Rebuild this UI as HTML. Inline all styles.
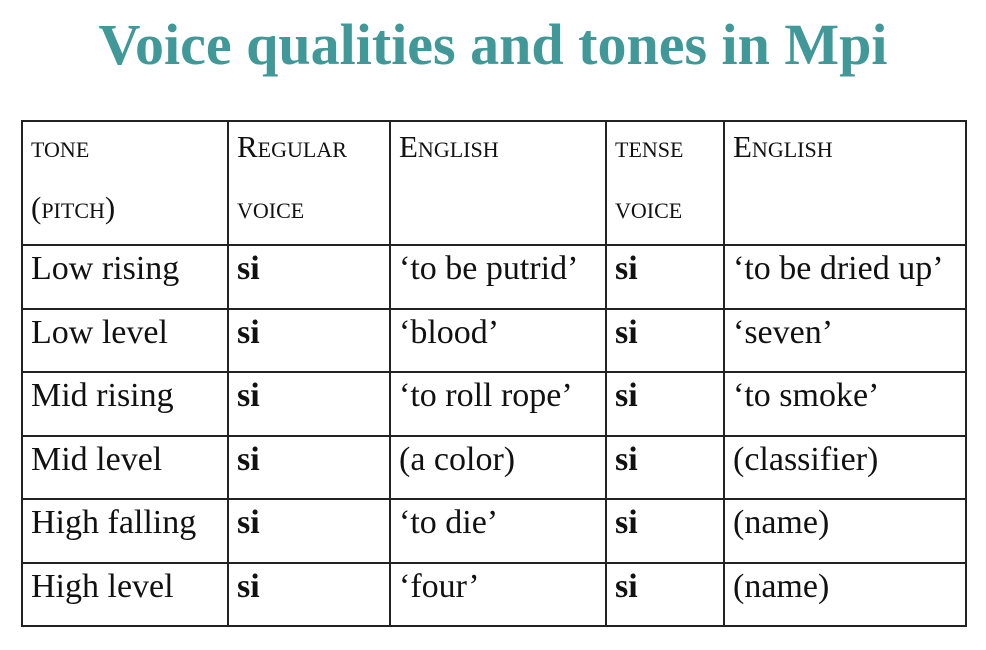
<!DOCTYPE html>
<html><head><style>
body{margin:0;width:986px;height:650px;background:#fff;overflow:hidden;font-family:"Liberation Serif",serif;}
h1{position:absolute;left:0;top:10px;width:986px;margin:0;text-align:center;color:#409898;font-size:58px;font-weight:bold;line-height:70px;}
table{position:absolute;left:21px;top:120px;border-collapse:collapse;}
td{border:2px solid #222;padding:3px 0 0 8px;vertical-align:top;font-size:34px;color:#111;height:58.5px;line-height:40px;}
tr.h td{height:121px;padding-top:0;font-variant:small-caps;font-size:31px;line-height:61px;}
tr.h td div{position:relative;top:-6px;height:122px;}
b{font-weight:bold}
</style></head><body>
<h1>Voice qualities and tones in Mpi</h1>
<table>
<colgroup><col style="width:206px"><col style="width:162px"><col style="width:216px"><col style="width:118px"><col style="width:242px"></colgroup>
<tr class="h"><td><div>tone<br>(pitch)</div></td><td><div>Regular<br>voice</div></td><td><div>English</div></td><td><div>tense<br>voice</div></td><td><div>English</div></td></tr>
<tr><td>Low rising</td><td><b>si</b></td><td>‘to be putrid’</td><td><b>si</b></td><td>‘to be dried up’</td></tr>
<tr><td>Low level</td><td><b>si</b></td><td>‘blood’</td><td><b>si</b></td><td>‘seven’</td></tr>
<tr><td>Mid rising</td><td><b>si</b></td><td>‘to roll rope’</td><td><b>si</b></td><td>‘to smoke’</td></tr>
<tr><td>Mid level</td><td><b>si</b></td><td>(a color)</td><td><b>si</b></td><td>(classifier)</td></tr>
<tr><td>High falling</td><td><b>si</b></td><td>‘to die’</td><td><b>si</b></td><td>(name)</td></tr>
<tr><td>High level</td><td><b>si</b></td><td>‘four’</td><td><b>si</b></td><td>(name)</td></tr>
</table>
</body></html>
